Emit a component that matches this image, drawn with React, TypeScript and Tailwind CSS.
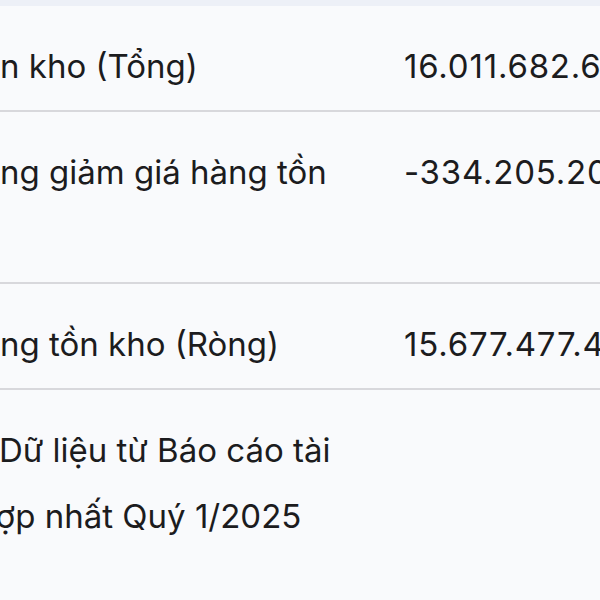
const rows = [
  { label: 'n kho (Tổng)', value: '16.011.682.6', lines: 1 },
  { label: 'ng giảm giá hàng tồn', value: '-334.205.20', lines: 2 },
  { label: 'ng tồn kho (Ròng)', value: '15.677.477.4', lines: 1 },
]

export default function App() {
  return (
    <div
      className="w-[600px] h-[600px] overflow-hidden bg-[#f9fafc] text-[#1c1c1e] text-[33px] leading-[66px]"
      style={{ fontFamily: 'Inter, "Noto Sans", sans-serif' }}
    >
      <div className="h-[6px] bg-[#edf0f7]" />
      {rows.map((r) => (
        <div key={r.label} className="flex pt-[27px] pb-[11px] border-b-2 border-[#d8d8dc]">
          <div className={r.lines === 2 ? 'w-[404px] shrink-0 whitespace-nowrap h-[132px]' : 'w-[404px] shrink-0 whitespace-nowrap'}>
            {r.label}
          </div>
          <div className="whitespace-nowrap tracking-[0.8px]">{r.value}</div>
        </div>
      ))}
      <div className="pt-[27px] whitespace-nowrap">
        <div className="-ml-[1px]">Dữ liệu từ Báo cáo tài</div>
        <div className="-ml-[24px]">hợp nhất Quý 1/2025</div>
      </div>
    </div>
  )
}
